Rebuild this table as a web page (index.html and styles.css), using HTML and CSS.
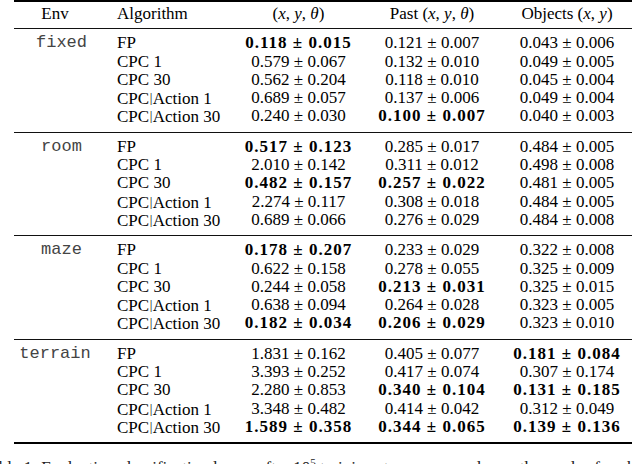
FILE: index.html
```html
<!DOCTYPE html>
<html>
<head>
<meta charset="utf-8">
<link rel="stylesheet" href="styles.css">
</head>
<body>
<div class="table">
  <div class="rule thick"></div>
  <div class="head">
    <div class="env">Env</div>
    <div class="alg">Algorithm</div>
    <div class="val">(<i>x</i>, <i>y</i>, <i>θ</i>)</div>
    <div class="val">Past (<i>x</i>, <i>y</i>, <i>θ</i>)</div>
    <div class="val">Objects (<i>x</i>, <i>y</i>)</div>
  </div>
  <div class="rule"></div>

  <div class="group">
    <div class="env mono shift">fixed</div>
    <div class="alg">FP</div><div class="val b">0.118 ± 0.015</div><div class="val">0.121 ± 0.007</div><div class="val">0.043 ± 0.006</div>
    <div class="alg">CPC 1</div><div class="val">0.579 ± 0.067</div><div class="val">0.132 ± 0.010</div><div class="val">0.049 ± 0.005</div>
    <div class="alg">CPC 30</div><div class="val">0.562 ± 0.204</div><div class="val">0.118 ± 0.010</div><div class="val">0.045 ± 0.004</div>
    <div class="alg">CPC<span class="bar">|</span>Action 1</div><div class="val">0.689 ± 0.057</div><div class="val">0.137 ± 0.006</div><div class="val">0.049 ± 0.004</div>
    <div class="alg">CPC<span class="bar">|</span>Action 30</div><div class="val">0.240 ± 0.030</div><div class="val b">0.100 ± 0.007</div><div class="val">0.040 ± 0.003</div>
  </div>
  <div class="rule"></div>

  <div class="group">
    <div class="env mono shift">room</div>
    <div class="alg">FP</div><div class="val b">0.517 ± 0.123</div><div class="val">0.285 ± 0.017</div><div class="val">0.484 ± 0.005</div>
    <div class="alg">CPC 1</div><div class="val">2.010 ± 0.142</div><div class="val">0.311 ± 0.012</div><div class="val">0.498 ± 0.008</div>
    <div class="alg">CPC 30</div><div class="val b">0.482 ± 0.157</div><div class="val b">0.257 ± 0.022</div><div class="val">0.481 ± 0.005</div>
    <div class="alg">CPC<span class="bar">|</span>Action 1</div><div class="val">2.274 ± 0.117</div><div class="val">0.308 ± 0.018</div><div class="val">0.484 ± 0.005</div>
    <div class="alg">CPC<span class="bar">|</span>Action 30</div><div class="val">0.689 ± 0.066</div><div class="val">0.276 ± 0.029</div><div class="val">0.484 ± 0.008</div>
  </div>
  <div class="rule"></div>

  <div class="group">
    <div class="env mono shift">maze</div>
    <div class="alg">FP</div><div class="val b">0.178 ± 0.207</div><div class="val">0.233 ± 0.029</div><div class="val">0.322 ± 0.008</div>
    <div class="alg">CPC 1</div><div class="val">0.622 ± 0.158</div><div class="val">0.278 ± 0.055</div><div class="val">0.325 ± 0.009</div>
    <div class="alg">CPC 30</div><div class="val">0.244 ± 0.058</div><div class="val b">0.213 ± 0.031</div><div class="val">0.325 ± 0.015</div>
    <div class="alg">CPC<span class="bar">|</span>Action 1</div><div class="val">0.638 ± 0.094</div><div class="val">0.264 ± 0.028</div><div class="val">0.323 ± 0.005</div>
    <div class="alg">CPC<span class="bar">|</span>Action 30</div><div class="val b">0.182 ± 0.034</div><div class="val b">0.206 ± 0.029</div><div class="val">0.323 ± 0.010</div>
  </div>
  <div class="rule"></div>

  <div class="group">
    <div class="env mono">terrain</div>
    <div class="alg">FP</div><div class="val">1.831 ± 0.162</div><div class="val">0.405 ± 0.077</div><div class="val b">0.181 ± 0.084</div>
    <div class="alg">CPC 1</div><div class="val">3.393 ± 0.252</div><div class="val">0.417 ± 0.074</div><div class="val">0.307 ± 0.174</div>
    <div class="alg">CPC 30</div><div class="val">2.280 ± 0.853</div><div class="val b">0.340 ± 0.104</div><div class="val b">0.131 ± 0.185</div>
    <div class="alg">CPC<span class="bar">|</span>Action 1</div><div class="val">3.348 ± 0.482</div><div class="val">0.414 ± 0.042</div><div class="val">0.312 ± 0.049</div>
    <div class="alg">CPC<span class="bar">|</span>Action 30</div><div class="val b">1.589 ± 0.358</div><div class="val b">0.344 ± 0.065</div><div class="val b">0.139 ± 0.136</div>
  </div>
  <div class="rule thick"></div>
</div>
<p class="caption">Table 1: Evaluation classification losses after 10<sup>5</sup> training steps, averaged over the seeds of each probe with std.</p>
</body>
</html>
```

FILE: styles.css
```css
html, body {
  margin: 0;
  padding: 0;
  background: #fff;
}

body {
  font-family: "Liberation Serif", "Times New Roman", serif;
  font-size: 17px;
  line-height: 18.3px;
  color: #000;
  overflow: hidden;
}

.table {
  width: 618px;
  margin-left: 14px;
}

.rule {
  height: 1px;
  background: #111;
}

.rule.thick {
  height: 2px;
  background: #000;
}

.head {
  display: grid;
  grid-template-columns: 82px 139px 127px 140px 130px;
  padding: 3px 0 5px;
}

.group {
  display: grid;
  grid-template-columns: 82px 139px 127px 140px 130px;
  grid-auto-rows: 18.3px;
  padding: 5px 0 6px;
}

.group .env {
  grid-row: 1 / span 5;
  align-self: start;
}

.env {
  text-align: center;
}

.mono {
  font-family: "Liberation Mono", "Courier New", monospace;
  color: #444;
}

.shift {
  padding-left: 13px;
}

.alg {
  padding-left: 21px;
  white-space: nowrap;
}

.bar {
  font-size: 13px;
  vertical-align: 2px;
  margin: 0 0.5px;
}

.val {
  text-align: center;
  white-space: nowrap;
}

.val.b {
  font-weight: 700;
  letter-spacing: 1px;
}

.caption {
  margin: 15px 0 0 -18px;
  white-space: nowrap;
  color: #222;
}

.caption sup {
  font-size: 11px;
  line-height: 0;
}
```
